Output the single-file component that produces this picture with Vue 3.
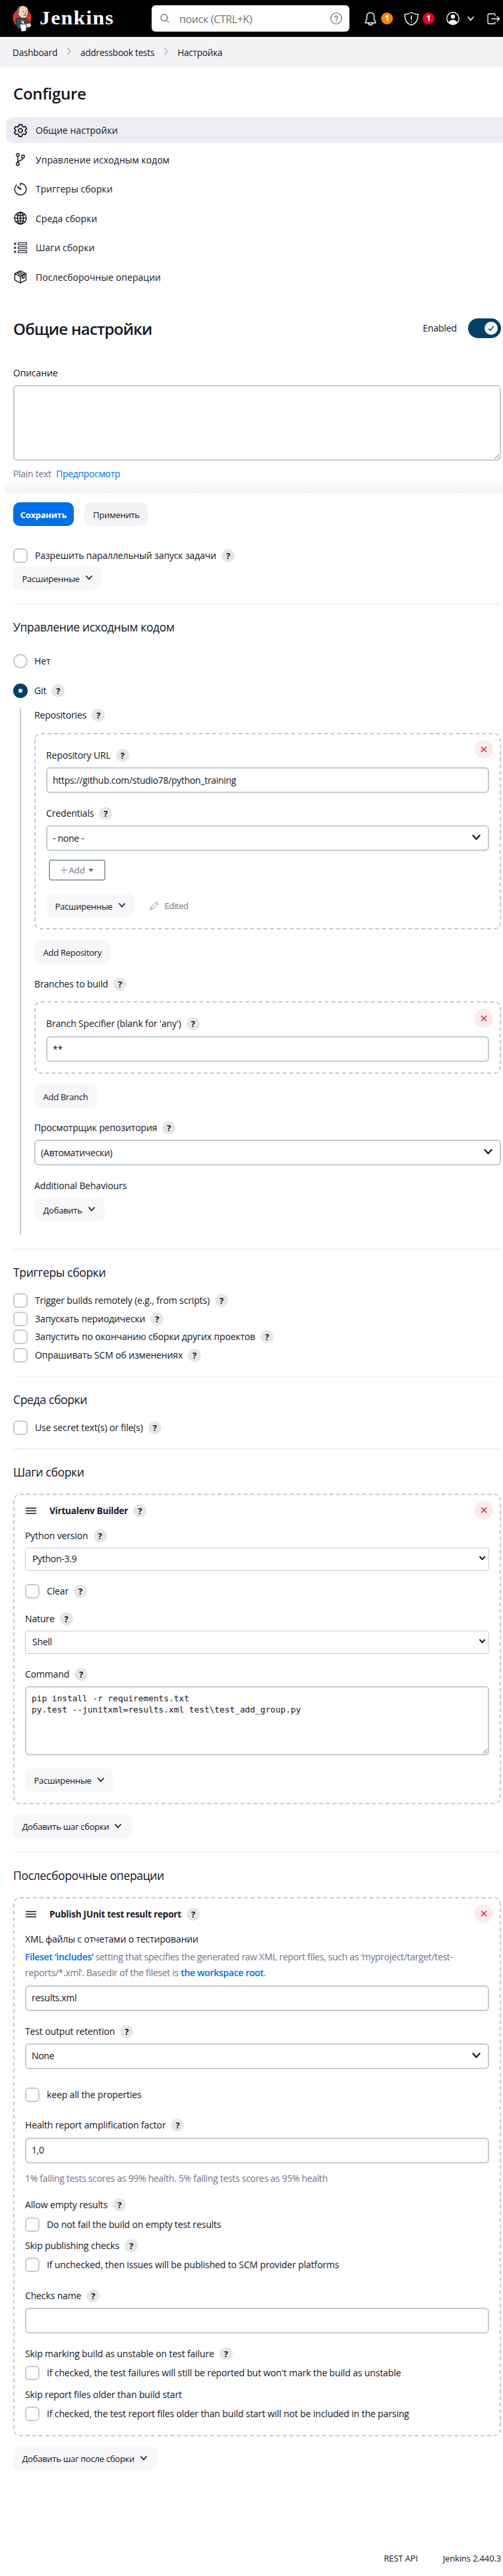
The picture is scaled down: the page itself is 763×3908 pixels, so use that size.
<script setup>
import { h } from 'vue'

const Help = () => h('span', { class: 'help' }, '?')
const Chevron = (props) =>
  h('svg', { class: 'chev', viewBox: '0 0 10 7' }, [
    h('path', { d: 'M1 1l4 4.5L9 1', fill: 'none', stroke: 'currentColor', 'stroke-width': props.w || 1.7, 'stroke-linecap': 'round', 'stroke-linejoin': 'round' })
  ])
Chevron.props = ['w']
const Remove = () =>
  h('svg', { class: 'remove', viewBox: '0 0 28 28' }, [
    h('circle', { cx: 14, cy: 14, r: 14, fill: '#fcebed' }),
    h('path', { d: 'M10 10l8 8M18 10l-8 8', stroke: '#e6001f', 'stroke-width': 1.2 })
  ])
const Grip = () =>
  h('svg', { class: 'grip', viewBox: '0 0 16 10' }, [
    h('path', { d: 'M0 1h16M0 5h16M0 9h16', stroke: '#14141f', 'stroke-width': 1.7 })
  ])

const nav = [
  { id: 'gear', text: 'Общие настройки' },
  { id: 'branch', text: 'Управление исходным кодом' },
  { id: 'timer', text: 'Триггеры сборки' },
  { id: 'globe', text: 'Среда сборки' },
  { id: 'list', text: 'Шаги сборки' },
  { id: 'box', text: 'Послесборочные операции' }
]
const triggers = [
  'Trigger builds remotely (e.g., from scripts)',
  'Запускать периодически',
  'Запустить по окончанию сборки других проектов',
  'Опрашивать SCM об изменениях'
]
const command = 'pip install -r requirements.txt\npy.test --junitxml=results.xml test\\test_add_group.py'
</script>

<template>
  <div class="page">
    <header class="top">
      <svg class="butler" viewBox="0 0 28 40">
        <ellipse cx="14" cy="19.5" rx="14" ry="14.5" fill="#d33833" />
        <path d="M5 21l5-2 8 1 6 3 2 9-3 4H9l-4-5z" fill="#335061" stroke="#14141f" stroke-width=".8" />
        <path d="M7 9C6 4 10 .6 15 .8c6 .2 8.500 4 8.300 9-.1 5-1.800 9.500-6.300 10-4 .4-8-2.500-9-6z" fill="#f0d6b7" stroke="#14141f" stroke-width=".8" />
        <path d="M6.500 13C5 6 8 1.500 13 .9 9.500 4 9.500 7 9.500 9.500L8.500 14z" fill="#6d6b6d" />
        <path d="M14.500 9.500h2M19.500 8.700h2M16 15.200c2 .8 3.500.4 4.500-.4M19 10.500l1 2.500h-2" stroke="#14141f" stroke-width=".8" fill="none" />
        <path d="M13 20.500l3 1.500 1 7-4-3z" fill="#fff" />
        <path d="M13 20l4 2 4-2.500 1 4.500-4.500-1-3.500 1.500z" fill="#d33833" stroke="#14141f" stroke-width=".5" />
        <path d="M10.500 29l9-.5 1 3-.5 7.500-7 .7z" fill="#fff" stroke="#14141f" stroke-width=".5" />
        <path d="M21 29l5-1.500 1.500 3-2 2.500-4-.5z" fill="#f0d6b7" stroke="#fff" stroke-width=".7" />
      </svg>
      <span class="brand">Jenkins</span>
      <div class="search">
        <svg class="lens" viewBox="0 0 14 14"><circle cx="6" cy="5.800" r="5" fill="none" stroke="#14141f" stroke-width=".9" /><path d="M9.600 9.600l4 4" stroke="#14141f" stroke-width=".9" /></svg>
        <span class="placeholder">поиск (CTRL+K)</span>
        <svg class="q" viewBox="0 0 18 18"><circle cx="9" cy="9" r="8.300" fill="none" stroke="#73738c" stroke-width="1.300" /><path d="M6.900 7.200c0-2.600 4.200-2.600 4.200 0 0 1.600-2.100 1.600-2.100 3.300" fill="none" stroke="#73738c" stroke-width="1.400" stroke-linecap="round" /><circle cx="9" cy="13" r=".9" fill="#73738c" /></svg>
      </div>
      <svg class="bell" viewBox="0 0 18 21"><path d="M9 1.200c-3.800 0-5.500 2.800-5.500 5.800v4L1.200 16c-.2.500 0 .8.500.8h14.600c.5 0 .7-.3.500-.8l-2.300-5V7c0-3-1.700-5.800-5.500-5.800zM6 17c0 4 6 4 6 0" fill="none" stroke="#fff" stroke-width="1.500" stroke-linejoin="round" /></svg>
      <span class="badge orange">1</span>
      <svg class="shield" viewBox="0 0 22 21"><path d="M11 1C8 2.800 4.500 3.600 1 3.600c0 8 1.500 13 10 16.600 8.500-3.600 10-8.600 10-16.600C17.500 3.600 14 2.800 11 1z" fill="none" stroke="#fff" stroke-width="1.400" stroke-linejoin="round" /><path d="M11 5.500v7M11 14.800v1.500" stroke="#fff" stroke-width="1.500" /></svg>
      <span class="badge red">1</span>
      <svg class="user" viewBox="0 0 20 20"><circle cx="10" cy="10" r="9.200" fill="none" stroke="#fff" stroke-width="1.400" /><circle cx="10" cy="7.300" r="3.200" fill="#fff" /><path d="M4 16c.5-5 11.500-5 12 0-3 3.500-9 3.500-12 0z" fill="#fff" /></svg>
      <Chevron class="white" />
      <svg class="exit" viewBox="0 0 20 17"><path d="M12 4V3c0-1.300-.8-2-2-2H3C1.800 1 1 1.700 1 3v11c0 1.300.8 2 2 2h7c1.200 0 2-.7 2-2v-1M6.500 8.500h12M14.800 4.800l3.700 3.700-3.700 3.700" fill="none" stroke="#fff" stroke-width="1.300" /></svg>
    </header>

    <nav class="crumbs">
      <span>Dashboard</span><svg class="sep" viewBox="0 0 7 12"><path d="M1 1l5 5-5 5" fill="none" stroke="#a3a3b5" stroke-width="1.300" /></svg>
      <span>addressbook tests</span><svg class="sep" viewBox="0 0 7 12"><path d="M1 1l5 5-5 5" fill="none" stroke="#a3a3b5" stroke-width="1.300" /></svg>
      <span>Настройка</span>
    </nav>

    <aside class="side">
      <h1 class="title">Configure</h1>
      <div v-for="(n, i) in nav" :key="n.id" class="task" :class="{ active: i === 0 }">
        <svg class="task-icon" viewBox="0 0 20 20" fill="none" stroke="#14141f" stroke-width="1.400" stroke-linejoin="round" stroke-linecap="round">
          <template v-if="n.id === 'gear'">
            <path d="M8 .8h4l.6 2.700 2.100 1.200 2.600-.8 2 3.400-2 1.800v1.800l2 1.800-2 3.400-2.600-.8-2.100 1.200-.6 2.700H8l-.6-2.700-2.100-1.200-2.600.8-2-3.400 2-1.800V9.100l-2-1.800 2-3.400 2.600.8 2.100-1.200z" stroke-width="1.700" />
            <circle cx="10" cy="10" r="3" stroke-width="1.600" />
          </template>
          <template v-else-if="n.id === 'branch'">
            <circle cx="6" cy="3" r="2.200" /><circle cx="6" cy="17" r="2.200" /><circle cx="14" cy="5.500" r="2.200" />
            <path d="M6 5.200v9.600M14 7.700c0 4-7 3-7.800 6.500" />
          </template>
          <template v-else-if="n.id === 'timer'">
            <path d="M10 4.500V1.300a8.700 8.700 0 1 1-6 2.500" /><path d="M6 6.700l4.500 3.200" stroke-width="2.200" />
          </template>
          <template v-else-if="n.id === 'globe'">
            <circle cx="10" cy="10" r="9" /><ellipse cx="10" cy="10" rx="4.500" ry="9" /><path d="M10 1v18M1 10h18M3.300 4.300c4 2.500 9.400 2.500 13.400 0M3.300 15.700c4-2.500 9.400-2.500 13.400 0" />
          </template>
          <template v-else-if="n.id === 'list'">
            <g stroke-width="1.200"><circle cx="1.800" cy="4" r="1.200" /><circle cx="1.800" cy="10" r="1.200" /><circle cx="1.800" cy="16" r="1.200" />
            <rect x="6.500" y="2.300" width="13" height="3.200" rx="1.200" /><rect x="6.500" y="8.300" width="13" height="3.200" rx="1.200" /><rect x="6.500" y="14.300" width="13" height="3.200" rx="1.200" /></g>
          </template>
          <template v-else>
            <path d="M10 .8l8.500 4.400v9.600L10 19.200l-8.500-4.400V5.200zM1.500 5.200L10 9.700l8.500-4.500M10 9.700v9.500M4.500 3.700l8.500 4.500v4.500l2.700-1.500V6.700L7.200 2.300" />
          </template>
        </svg>
        <span>{{ n.text }}</span>
      </div>
    </aside>

    <main>
      <div class="head">
        <h1>Общие настройки</h1>
        <span class="enabled">Enabled</span>
        <span class="toggle"><svg class="knob" viewBox="0 0 20 20"><circle cx="10" cy="10" r="10" fill="#fff" /><path d="M6.300 10.600l2.400 2.700 5-6.500" fill="none" stroke="#063f62" stroke-width="1.500" /></svg></span>
      </div>
      <p class="label desc">Описание</p>
      <textarea class="ta desc-area"></textarea>
      <p class="format">Plain text <b>Предпросмотр</b></p>

      <div class="fade"></div>
      <div class="sticky">
        <span class="btn primary">Сохранить</span>
        <span class="btn apply">Применить</span>
      </div>

      <p class="cb after-bar"><i class="box"></i>Разрешить параллельный запуск задачи<Help /></p>
      <span class="btn adv first">Расширенные<Chevron /></span>
      <hr class="hr1" />

      <h2>Управление исходным кодом</h2>
      <p class="cb radio r1"><i class="round"></i>Нет</p>
      <p class="cb radio r2"><i class="round on"></i>Git<Help /></p>
      <section class="git">
        <p class="label repos">Repositories<Help /></p>
        <div class="chunk repo">
          <Remove />
          <p class="label">Repository URL<Help /></p>
          <div class="input">https://github.com/studio78/python_training</div>
          <p class="label">Credentials<Help /></p>
          <div class="input sel">- none -<Chevron class="big" /></div>
          <span class="add"><svg class="plus" viewBox="0 0 10 10"><path d="M5 0v10M0 5h10" stroke="#73738c" stroke-width=".9" /></svg>Add<i class="tri"></i></span>
          <div class="row">
            <span class="btn adv">Расширенные<Chevron /></span>
            <span class="edited"><svg class="pencil" viewBox="0 0 14 14"><path d="M1 13l1-4L10 1.300c1-.9 3.400 1.200 2.500 2.400L4.700 12zM9 2.500l2.600 2.600M2 9.200l2.700 2.700" fill="none" stroke="#8a8aa0" stroke-width=".9" /></svg>Edited</span>
          </div>
        </div>
        <span class="btn gap16">Add Repository</span>
        <p class="label gap21 branches">Branches to build<Help /></p>
        <div class="chunk branch">
          <Remove />
          <p class="label">Branch Specifier (blank for 'any')<Help /></p>
          <div class="input">**</div>
        </div>
        <span class="btn gap16">Add Branch</span>
        <p class="label gap20">Просмотрщик репозитория<Help /></p>
        <div class="input sel">(Автоматически)<Chevron class="big" /></div>
        <p class="label">Additional Behaviours</p>
        <span class="btn">Добавить<Chevron /></span>
      </section>
      <hr class="hr2" />

      <h2>Триггеры сборки</h2>
      <div class="trig">
        <p v-for="t in triggers" :key="t" class="cb"><i class="box"></i>{{ t }}<Help /></p>
      </div>
      <hr />

      <h2>Среда сборки</h2>
      <p class="cb env"><i class="box"></i>Use secret text(s) or file(s)<Help /></p>
      <hr />

      <h2>Шаги сборки</h2>
      <div class="chunk step">
        <Remove />
        <p class="label bold"><Grip />Virtualenv Builder<Help /></p>
        <p class="label pyv">Python version<Help /></p>
        <div class="input thin">Python-3.9<Chevron class="small" :w="2.4" /></div>
        <p class="cb clear"><i class="box"></i>Clear<Help /></p>
        <p class="label">Nature<Help /></p>
        <div class="input thin">Shell<Chevron class="small" :w="2.4" /></div>
        <p class="label cmd">Command<Help /></p>
        <textarea class="ta code" :value="command"></textarea>
        <span class="btn adv">Расширенные<Chevron /></span>
      </div>
      <span class="btn gap16">Добавить шаг сборки<Chevron /></span>
      <hr class="hr3" />

      <h2>Послесборочные операции</h2>
      <div class="chunk junit">
        <Remove />
        <p class="label bold"><Grip />Publish JUnit test result report<Help /></p>
        <p class="label xml">XML файлы с отчетами о тестировании</p>
        <p class="hint"><b>Fileset ‘includes’</b> setting that specifies the generated raw XML report files, such as ‘myproject/target/test-<br />reports/*.xml’. Basedir of the fileset is <b>the workspace root</b>.</p>
        <div class="input">results.xml</div>
        <p class="label">Test output retention<Help /></p>
        <div class="input sel">None<Chevron class="big" /></div>
        <p class="cb keep"><i class="box"></i>keep all the properties</p>
        <p class="label health">Health report amplification factor<Help /></p>
        <div class="input">1,0</div>
        <p class="note">1% failing tests scores as 99% health. 5% failing tests scores as 95% health</p>
        <p class="label empty">Allow empty results<Help /></p>
        <p class="cb"><i class="box"></i>Do not fail the build on empty test results</p>
        <p class="label skip">Skip publishing checks<Help /></p>
        <p class="cb"><i class="box"></i>If unchecked, then issues will be published to SCM provider platforms</p>
        <p class="label checks">Checks name<Help /></p>
        <div class="input"></div>
        <p class="label">Skip marking build as unstable on test failure<Help /></p>
        <p class="cb"><i class="box"></i>If checked, the test failures will still be reported but won't mark the build as unstable</p>
        <p class="label older">Skip report files older than build start</p>
        <p class="cb"><i class="box"></i>If checked, the test report files older than build start will not be included in the parsing</p>
      </div>
      <span class="btn gap16">Добавить шаг после сборки<Chevron /></span>
    </main>

    <footer><span>REST API</span><span>Jenkins 2.440.3</span></footer>
  </div>
</template>

<style>
body { background: #fff; }
</style>

<style scoped>
* { box-sizing: border-box; }
.page { width: 763px; height: 3908px; overflow: hidden; font: 500 14px/20px "Open Sans", "Noto Sans", sans-serif; font-stretch: 93%; letter-spacing: -.14px; color: #14141f; display: flex; flex-direction: column; white-space: nowrap; }
p, h1, h2, hr { margin: 0; }
svg { flex: none; display: block; }

.top { height: 56px; flex: none; background: #000; display: flex; align-items: center; padding-left: 19px; }
.butler { width: 29px; height: 40px; }
.brand { width: 170px; margin: -3px 0 0 12px; font: 700 30px/32px "Liberation Serif", serif; letter-spacing: 1.2px; color: #fff; font-stretch: 100%; transform: scaleX(1.06); transform-origin: 0 50%; }
.search { width: 300px; height: 40px; border-radius: 6px; background: #fff; display: flex; align-items: center; padding: 0 11px 0 13px; }
.lens { width: 14px; height: 14px; }
.placeholder { flex: 1; margin-left: 15px; font-size: 16px; font-weight: 400; color: #757575; letter-spacing: -.35px; padding-top: 1px; }
.q { width: 18px; height: 18px; }
.bell { width: 18px; height: 21px; margin-left: 23px; }
.badge { width: 18px; height: 18px; border-radius: 50%; color: #fff; font-size: 12px; font-weight: 700; line-height: 18px; text-align: center; }
.orange { background: #fe820a; margin-left: 7px; }
.shield { width: 22px; height: 21px; margin-left: 17px; }
.red { background: #e6001f; margin-left: 6px; }
.user { width: 20px; height: 20px; margin-left: 18px; }
.chev { width: 10px; height: 7px; margin-left: 9px; position: relative; top: -1px; }
.chev.white { color: #fff; margin-left: 12px; top: 0; }
.exit { width: 20px; height: 17px; margin-left: 20px; }

.crumbs { height: 46px; flex: none; background: #f4f4f7; display: flex; align-items: center; padding-left: 19px; padding-top: 2px; font-size: 13.600px; letter-spacing: -.23px; }
.sep { width: 7px; height: 12px; margin: -5px 14px 0; }

.side { flex: none; height: 381px; padding-left: 9px; }
.title { font-size: 24px; line-height: 32px; font-weight: 600; margin: 23px 0 0 11px; height: 53px; padding-top: 1px; letter-spacing: -.3px; }
.task { height: 39px; margin-bottom: 5.6px; border-radius: 10px; display: flex; align-items: center; padding-left: 12px; gap: 13px; letter-spacing: .04px; }
.task span { padding-top: 1px; }
.task.active { background: #ececf2; border-radius: 10px 0 0 10px; }
.task-icon { width: 20px; height: 20px; }

main { padding: 0 3px 0 20px; flex: 1; min-height: 0; }
.head { height: 30px; display: flex; align-items: center; }
.head h1 { flex: 1; font-size: 24px; font-weight: 600; line-height: 32px; padding-top: 2px; letter-spacing: -.75px; }
.enabled { margin-right: 17px; }
.toggle { width: 50px; height: 30px; border-radius: 15px; background: #063f62; display: flex; align-items: center; justify-content: flex-end; padding-right: 5px; }
.knob { width: 20px; height: 20px; }

.label { height: 20px; margin-bottom: 8px; display: flex; align-items: center; }
.help { width: 20px; height: 20px; border-radius: 50%; background: #e6e6e6; margin-left: 8px; font: 700 13px/20px "Open Sans", sans-serif; text-align: center; flex: none; }
.desc { margin-top: 43px; }
.ta { display: block; width: 100%; border: 2px solid #c3ccd1; border-radius: 6px; background: #fff; outline: none; resize: vertical; padding: 8px; color: #14141f; }
.desc-area { height: 115px; }
.format { height: 29px; padding-top: 10px; color: #73738c; font-weight: 400; letter-spacing: -.3px; }
.format b, .hint b { color: #006fe6; font-weight: 600; }
.format b { margin-left: 4px; font-weight: 500; }
.fade { height: 20px; margin: 0 -3px 0 -12px; background: linear-gradient(to bottom, #fff, #f2f2f2); border-top-left-radius: 12px; }
.sticky { height: 64px; padding: 14px 0; display: flex; gap: 16px; background: #fff; }
.btn { height: 36px; width: max-content; padding: 1px 13.5px 0; border-radius: 10px; background: #f7f7fa; display: flex; align-items: center; font-size: 13px; line-height: 34px; letter-spacing: -.27px; }
.btn .chev { margin-right: 2px; }
.btn.primary { background: #006fe6; color: #fff; font-weight: 700; width: 92px; justify-content: center; padding: 1px 0 0; letter-spacing: -.3px; }
.btn.apply { background: #f4f4f7; width: 97px; justify-content: center; padding: 1px 0 0; }
.btn.adv { width: 133.500px; }
.cb { height: 22px; display: flex; align-items: center; }
.box, .round { width: 22px; height: 22px; border: 2px solid #c3ccd1; border-radius: 6px; margin-right: 11px; flex: none; background: #fff; }
.round { border-radius: 50%; margin-right: 10px; }
.round.on { border: 8px solid #063f62; }
.after-bar { margin-top: 20px; }
.first { margin-top: 5px; }
hr { height: 2px; border: 0; background: #f2f2f7; margin-top: 20px; }
h2 { height: 24px; font-size: 17.600px; line-height: 24px; font-weight: 500; margin-top: 22px; letter-spacing: -.38px; }
.r1 { margin-top: 29px; }
.r2 { margin-top: 23px; }
.git { margin: 16px 0 0 10px; border-left: 2px solid #c3ccd1; padding-left: 20px; height: 798px; }
.chunk { border: 2px dashed #c3ccd1; border-radius: 10px; padding: 0 16px; position: relative; }
.remove { position: absolute; right: 10px; top: 9px; width: 28px; height: 28px; }
.repos { margin-bottom: 17px; }
.repo { height: 298px; padding-top: 22px; }
.input { height: 39px; border: 2px solid #c3ccd1; border-radius: 6px; padding: 0 8px; margin-bottom: 21px; display: flex; align-items: center; font-weight: 400; background: #fff; letter-spacing: -.3px; }
.repo .input.sel { margin-bottom: 13px; }
.sel { justify-content: space-between; }
.big { width: 13px; height: 9px; margin-right: 3px; }
.add { margin-left: 4px; width: 86px; height: 32px; border: 2px solid #9aa7b0; border-radius: 4px; display: flex; align-items: center; justify-content: center; color: #73738c; font-size: 13.500px; }
.plus { width: 10px; height: 10px; margin-right: 2px; }
.tri { border: 4px solid transparent; border-top: 5px solid #73738c; border-bottom: 0; margin-left: 5px; }
.row { display: flex; margin-top: 20px; }
.edited { display: flex; align-items: center; gap: 9px; margin-left: 23px; color: #73738c; font-size: 13px; letter-spacing: -.4px; }
.pencil { width: 14px; height: 14px; }
.gap16 { margin-top: 16px; }
.gap20 { margin-top: 20px; }
.gap21 { margin-top: 21px; }
.branches { margin-bottom: 16px; }
.branch { height: 110px; padding-top: 22px; }
.branch .label { margin-bottom: 9px; }
.branch .remove { top: 10px; }
.hr2 { margin-top: 21px; }
.trig { margin-top: 20px; display: flex; flex-direction: column; gap: 5.670px; }
.env { margin-top: 20px; }
.step { height: 471px; margin-top: 21px; padding-top: 14px; }
.bold { font-weight: 700; font-size: 13.500px; letter-spacing: -.2px; }
.grip { width: 16px; height: 10px; margin: 0 20px 0 1px; }
.pyv { margin-top: 18px; }
.thin { height: 35px; border: 1px solid #c3ccd1; border-radius: 3px; padding: 0 5px 0 10px; justify-content: space-between; margin-bottom: 20px; }
.small { width: 9px; height: 6px; }
.clear { margin-bottom: 21px; }
.cmd { margin-top: 21px; }
.code { height: 105px; font: 12.800px/17px "DejaVu Sans Mono", monospace; letter-spacing: 0; margin-bottom: 20px; }
.hr3 { margin-top: 20px; }
.junit { height: 818px; margin-top: 21px; padding-top: 14px; }
.xml { margin: 18px 0 5px; }
.hint { line-height: 24px; color: #73738c; font-weight: 400; margin-bottom: 7px; height: 48px; letter-spacing: -.31px; }
.keep { margin-top: 28px; }
.health { margin-top: 25px; margin-bottom: 9px; }
.note { color: #73738c; font-weight: 400; margin: -8px 0 20px; height: 20px; letter-spacing: -.3px; }
.empty { margin-bottom: 9px; }
.skip { margin-top: 11px; }
.checks { margin-top: 26px; }
.older { margin-top: 12px; }
footer { height: 37px; flex: none; display: flex; justify-content: flex-end; gap: 38px; padding-right: 3px; font-size: 13px; }
</style>
